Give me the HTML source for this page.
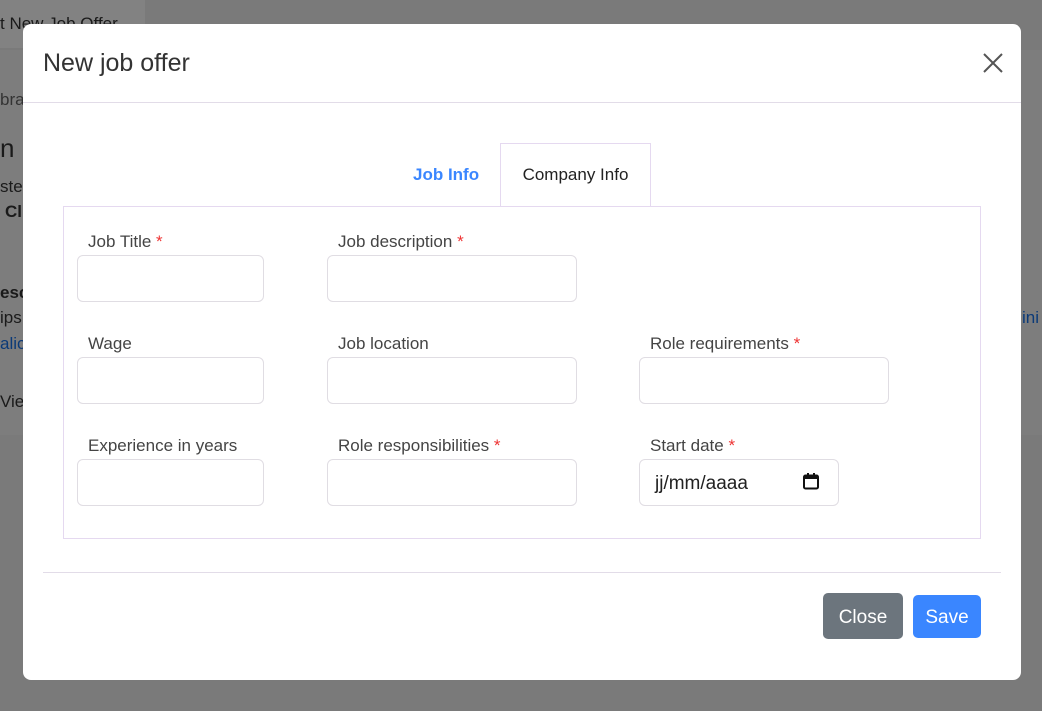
<!DOCTYPE html>
<html><head><meta charset="utf-8"><style>
*{box-sizing:border-box;margin:0;padding:0}
body{width:1042px;height:711px;overflow:hidden;background:#7a7a7a;font-family:"Liberation Sans",sans-serif;position:relative;color:#333}
.bg{position:absolute;color:#1a1a1a;font-size:17px}
.modal{position:absolute;left:23px;top:24px;width:998px;height:656px;background:#fff;border-radius:8px}
.title{position:absolute;left:20px;top:25px;font-size:25px;color:#333}
.hline{position:absolute;left:0;top:78px;width:998px;height:1px;background:#e2dce8}
.x{position:absolute;left:960px;top:29px}
.tab1{position:absolute;left:390px;top:141px;font-weight:bold;color:#3a86ff;font-size:17px}
.tab2{position:absolute;left:477px;top:119px;width:151px;height:63px;border:1px solid #e5d9f0;border-bottom:none;font-size:17px;line-height:62px;text-align:center;color:#222;background:#fff;z-index:2}
.box{position:absolute;left:40px;top:182px;width:918px;height:333px;border:1px solid #e5d9f0}
.lab{position:absolute;font-size:17px;color:#444}
.lab i{color:#e33;font-style:normal}
.in{position:absolute;height:47px;border:1px solid #e0dde3;border-radius:6px;background:#fff}
.fline{position:absolute;left:20px;top:548px;width:958px;height:1px;background:#e2dce8}
.btn{position:absolute;color:#fff;font-size:19px;text-align:center;border-radius:5px}
</style></head><body>
<div class="bg" style="left:0;top:0;width:145px;height:48px;background:#828282;border-radius:0 0 6px 0"></div>
<div class="bg" style="left:0;top:14px">t New Job Offer</div>
<div class="bg" style="left:0;top:50px;width:1042px;height:385px;background:#7d7d7d"></div>
<div class="bg" style="left:0;top:90px;color:#333">bra</div>
<div class="bg" style="left:0;top:133px;font-size:26px">n l</div>
<div class="bg" style="left:0;top:177px">ste</div>
<div class="bg" style="left:5px;top:202px;font-weight:bold">Cl</div>
<div class="bg" style="left:0;top:283px;font-weight:bold">esc</div>
<div class="bg" style="left:0;top:308px">ips</div>
<div class="bg" style="left:0;top:334px;color:#0b3a78">alic</div>
<div class="bg" style="left:0;top:392px">Viev</div>
<div class="bg" style="left:1022px;top:308px;color:#0b3a78">ini</div>
<div class="modal">
<div class="title">New job offer</div>
<svg class="x" width="20" height="20" viewBox="0 0 20 20"><path d="M1 1L19 19M19 1L1 19" stroke="#555" stroke-width="2"/></svg>
<div class="hline"></div>
<div class="tab1">Job Info</div>
<div class="tab2">Company Info</div>
<div class="box"></div>
<div class="lab" style="left:65px;top:208px">Job Title <i>*</i></div>
<div class="lab" style="left:315px;top:208px">Job description <i>*</i></div>
<div class="in" style="left:54px;top:231px;width:187px"></div>
<div class="in" style="left:304px;top:231px;width:250px"></div>
<div class="lab" style="left:65px;top:310px">Wage</div>
<div class="lab" style="left:315px;top:310px">Job location</div>
<div class="lab" style="left:627px;top:310px">Role requirements <i>*</i></div>
<div class="in" style="left:54px;top:333px;width:187px"></div>
<div class="in" style="left:304px;top:333px;width:250px"></div>
<div class="in" style="left:616px;top:333px;width:250px"></div>
<div class="lab" style="left:65px;top:412px">Experience in years</div>
<div class="lab" style="left:315px;top:412px">Role responsibilities <i>*</i></div>
<div class="lab" style="left:627px;top:412px">Start date <i>*</i></div>
<div class="in" style="left:54px;top:435px;width:187px"></div>
<div class="in" style="left:304px;top:435px;width:250px"></div>
<div class="in" style="left:616px;top:435px;width:200px;font-size:19px;color:#222;padding:13px 0 0 15px">jj/mm/aaaa
<svg style="position:absolute;left:163px;top:13px" width="16" height="17" viewBox="0 0 16 17"><rect x="1" y="2.5" width="14" height="13" rx="1.5" fill="none" stroke="#111" stroke-width="2"/><rect x="1" y="2" width="14" height="4" fill="#111"/><rect x="4" y="0" width="2" height="3" fill="#111"/><rect x="10" y="0" width="2" height="3" fill="#111"/></svg></div>
<div class="fline"></div>
<div class="btn" style="left:800px;top:569px;width:80px;height:46px;line-height:49px;background:#6c757d">Close</div>
<div class="btn" style="left:890px;top:571px;width:68px;height:43px;line-height:45px;background:#3a86ff">Save</div>
</div>
</body></html>
